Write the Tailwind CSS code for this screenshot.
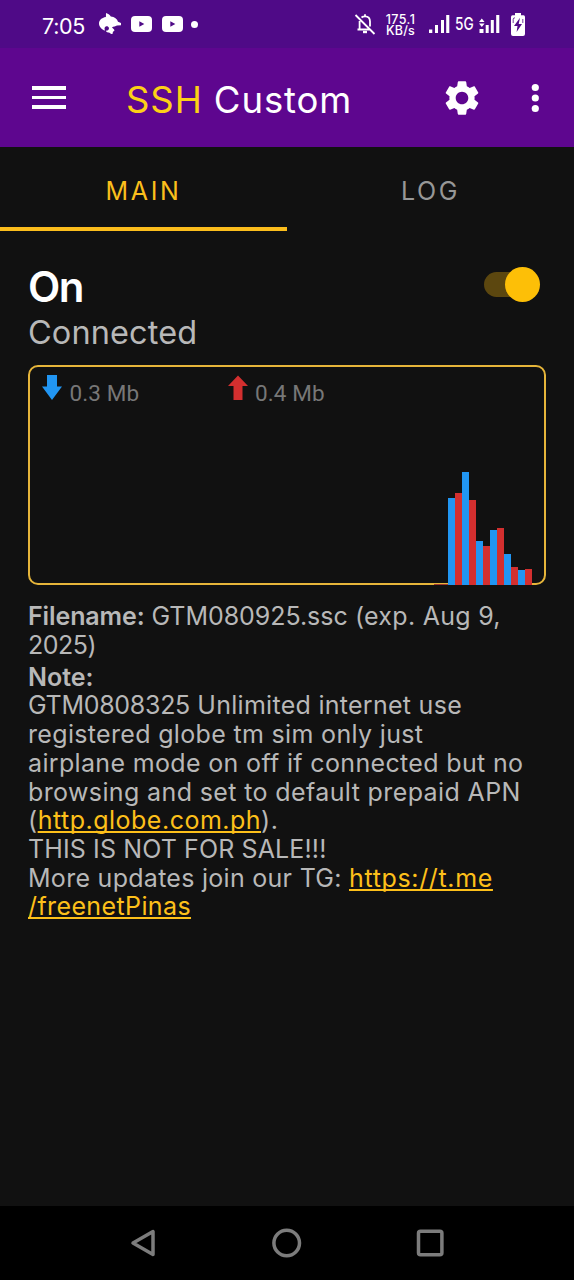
<!DOCTYPE html>
<html lang="en">
<head>
<meta charset="utf-8">
<title>SSH Custom</title>
<script src="https://cdn.jsdelivr.net/npm/@tailwindcss/browser@4"></script>
</head>
<body class="flex h-[1280px] w-[574px] flex-col overflow-hidden bg-[#111111] font-['Inter',sans-serif] text-[#b8b8b8]">

<!-- Status bar -->
<div class="flex h-12 shrink-0 items-center bg-[#4f0a87] pl-[42px] text-white">
  <span class="w-[57px] pt-[3px] text-[21.5px] leading-6 tracking-[-0.3px]">7:05</span>
  <svg class="h-[22px] w-[22px]" viewBox="0 0 22 22" fill="#fff"><path d="M7 0C9.500 .8 11 2 11.800 3.500C15.500 4 18.300 5.800 19 8.800L22 10V12.300L18 12.600C16.500 13.600 14.500 13.600 13 14.200C13.500 15.600 15.300 15.500 15.500 17.500C14.600 18.300 14 18.600 13.800 19.200C14 20.700 13.300 21 12.500 21C11.500 20.600 10.900 19.800 9.800 19.500C7.800 19.700 7 18.800 6.900 17.600C8.500 17.900 9.900 17 10 15C9.500 13.300 8 12.800 6.700 13.400C5.300 14.200 5.200 15.800 6.200 17.600C2.500 16.600 0 13.500 0 10.500C0 7 2.500 4.700 6.900 3.900Z"/></svg>
  <svg class="ml-[10px] h-4 w-[21px]" viewBox="0 0 21 16"><rect width="21" height="16" rx="4" fill="#fff"/><path d="M8.300 5.200L13.300 8L8.300 10.800Z" fill="#4f0a87"/></svg>
  <svg class="ml-[10px] h-4 w-[21px]" viewBox="0 0 21 16"><rect width="21" height="16" rx="4" fill="#fff"/><path d="M8.300 5.200L13.300 8L8.300 10.800Z" fill="#4f0a87"/></svg>
  <span class="ml-2 size-[7px] rounded-full bg-white"></span>
  <svg class="ml-[156px] h-[22px] w-[22px]" viewBox="0 0 22 22" fill="none" stroke="#fff" stroke-width="1.800"><path d="M7.500 4.500C8.500 3.700 9.500 3.300 11 3.300C14.200 3.300 16 5.400 16 8.500V13.500M5.600 8V16.300H15M3.500 16.500H16.500M11 3.500V1.200M1.500 2L20.500 21"/><path d="M9 19H13" stroke-width="2.400"/></svg>
  <span class="ml-[9px] flex w-[31px] flex-col items-center pt-px text-[12.500px] leading-[11px] font-medium whitespace-nowrap"><span class="tracking-[0.4px]">175.1</span><span class="tracking-[0.2px]">KB/s</span></span>
  <svg class="ml-[13px] h-[19px] w-[21px]" viewBox="0 0 21 19" fill="#fff"><path d="M0 14.500h3.300V18H0zM6 10h3V18H6zM12 5h3V18h-3zM17.200 0h3.100V18h-3.100z"/></svg>
  <span class="ml-[5px] w-[20px] origin-left scale-x-[0.78] text-[17.500px] leading-6 font-medium whitespace-nowrap">5G</span>
  <svg class="ml-[4px] h-[19px] w-[21px]" viewBox="0 0 21 19" fill="#fff"><path d="M2.800 3.500L5.600 7H0zM2.800 12L0 8.500H5.600zM.5 14h4V18h-4zM6.700 10h3V18h-3zM11.800 5h3V18h-3zM17.200 0h3.100V18h-3.100z"/></svg>
  <svg class="ml-[11px] h-[23px] w-[14px]" viewBox="0 0 14 23"><path d="M4 0h6v2.300h2.500Q14 2.300 14 4v17q0 2-2 2H2q-2 0-2-2V4q0-1.700 1.500-1.700H4z" fill="#fff"/><path d="M9 4.800L3 13H6.500L5.600 19L11 11H7.700Z" fill="#4f0a87"/><path d="M2.200 10V6.200Q2.200 4.800 4 4.800M11.800 6V10" fill="none" stroke="#4f0a87" stroke-width=".8"/></svg>
</div>

<!-- App bar -->
<header class="flex h-[99px] shrink-0 items-center bg-[#5e068f] pl-8 text-white">
  <div class="flex w-[34px] flex-col gap-[6px]">
    <span class="h-[3.500px] bg-white"></span><span class="h-[3.500px] bg-white"></span><span class="h-[3.500px] bg-white"></span>
  </div>
  <h1 class="ml-[60px] w-[240px] pt-[5px] text-[36.500px] leading-[44px] tracking-[0.900px] whitespace-nowrap"><span class="text-[#fdd017]">SSH</span> Custom</h1>
  <svg class="ml-[74.500px] size-[42px]" viewBox="0 0 24 24" fill="#fff"><path d="M19.140 12.940c.04-.3.060-.61.060-.94 0-.32-.02-.64-.07-.94l2.030-1.580c.18-.14.230-.41.120-.61l-1.920-3.320c-.12-.22-.37-.29-.59-.22l-2.390.96c-.5-.38-1.030-.7-1.620-.94l-.36-2.540c-.04-.24-.24-.41-.48-.41h-3.840c-.24 0-.43.170-.47.410l-.36 2.540c-.59.240-1.130.570-1.620.940l-2.390-.96c-.22-.08-.47 0-.59.220L2.740 8.870c-.12.210-.08.470.12.610l2.030 1.580c-.05.300-.09.630-.09.940s.02.640.070.940l-2.030 1.580c-.18.140-.23.410-.12.610l1.920 3.320c.12.220.37.290.59.220l2.390-.96c.5.380 1.030.7 1.620.940l.36 2.540c.05.240.24.410.48.410h3.840c.24 0 .44-.17.470-.41l.36-2.540c.59-.24 1.130-.56 1.620-.94l2.390.96c.22.080.47 0 .59-.22l1.920-3.320c.12-.22.070-.47-.12-.61l-2.010-1.580zM12 15.600c-1.980 0-3.600-1.620-3.600-3.600s1.620-3.600 3.600-3.600 3.600 1.620 3.600 3.600-1.620 3.600-3.600 3.600z"/></svg>
  <svg class="ml-[48.500px] h-[30px] w-2" viewBox="0 0 8 30" fill="#fff"><circle cx="4.300" cy="4.500" r="3.600"/><circle cx="4.300" cy="15" r="3.600"/><circle cx="4.300" cy="25.500" r="3.600"/></svg>
</header>

<!-- Tabs -->
<nav class="grid h-[84px] shrink-0 grid-cols-2 text-center text-[25px] leading-[30px] tracking-[2.600px]">
  <div class="border-b-4 border-[#fbbd1c] pt-[29px] text-[#fbbf1c]">MAIN</div>
  <div class="pt-[29px] text-[#979797]">LOG</div>
</nav>

<main class="flex flex-1 flex-col px-7">
  <div class="flex h-[134px] justify-between">
    <div class="whitespace-nowrap">
      <div class="mt-[31px] text-[42px] leading-[50px] font-semibold tracking-[-1.500px] text-white">On</div>
      <div class="pt-px text-[32.500px] leading-10 tracking-[0.100px]">Connected</div>
    </div>
    <div class="mt-[36px] mr-[6px] flex h-[35px] w-14 items-center">
      <span class="h-[25px] w-10 rounded-full bg-[#5c470f]"></span>
      <span class="-ml-[19px] size-[35px] shrink-0 rounded-full bg-[#fdbf07]"></span>
    </div>
  </div>

  <!-- Traffic graph -->
  <section class="flex h-[220px] shrink-0 flex-col justify-between rounded-[10px] border-2 border-[#e6b53a] font-[Roboto,sans-serif] text-[22.500px] leading-7 text-[#777777]">
    <div class="flex pt-2 pl-3">
      <div class="flex w-[185.500px]">
        <svg class="h-[25px] w-5" viewBox="0 0 20 25"><path d="M5 0H15V11.500H20L10 25L0 11.500H5Z" fill="#2196f3"/></svg>
        <span class="ml-[7.500px] pt-1 tracking-[0.1px]">0.3 Mb</span>
      </div>
      <div class="flex">
        <svg class="h-[25px] w-5" viewBox="0 0 20 25"><path d="M10 .5L20 11H14.500V25H5.500V11H0Z" fill="#d32f2f"/></svg>
        <span class="ml-[7.500px] pt-1 tracking-[0.1px]">0.4 Mb</span>
      </div>
    </div>
    <div class="-mb-[2px] ml-[404px] flex items-end">
      <span class="h-px w-[14px] bg-[#a33a2c]"></span>
      <span class="h-[87px] w-[7px] bg-[#2196f3]"></span><span class="h-[92px] w-[7px] bg-[#d32f2f]"></span>
      <span class="h-[113px] w-[7px] bg-[#2196f3]"></span><span class="h-[85px] w-[7px] bg-[#d32f2f]"></span>
      <span class="h-[44px] w-[7px] bg-[#2196f3]"></span><span class="h-[39px] w-[7px] bg-[#d32f2f]"></span>
      <span class="h-[55px] w-[7px] bg-[#2196f3]"></span><span class="h-[57px] w-[7px] bg-[#d32f2f]"></span>
      <span class="h-[31px] w-[7px] bg-[#2196f3]"></span><span class="h-[18px] w-[7px] bg-[#d32f2f]"></span>
      <span class="h-[15px] w-[7px] bg-[#2196f3]"></span><span class="h-[16px] w-[7px] bg-[#d32f2f]"></span>
    </div>
  </section>

  <section class="pt-[17.300px] text-[25px] leading-[28.700px] whitespace-nowrap">
    <div class="flex"><b class="w-[123.500px] font-semibold tracking-[-0.1px]">Filename:</b><span><span class="tracking-[-0.050px]">GTM080925.ssc</span><span class="tracking-[0.280px]"> (exp. Aug 9,</span></span></div>
    <div class="tracking-[-0.500px]">2025)</div>
    <div class="pt-[3px] font-semibold">Note:</div>
    <div class="tracking-[0.280px]"><span class="tracking-[-0.300px]">GTM0808325</span> Unlimited internet use</div>
    <div class="tracking-[0.330px]">registered globe tm sim only just</div>
    <div class="tracking-[0.340px]">airplane mode on off if connected but no</div>
    <div class="tracking-[0.380px]">browsing and set to default prepaid APN</div>
    <div class="tracking-[0.500px]">(<a class="text-[#fdc01a] underline decoration-[1.500px] underline-offset-[2px] [text-decoration-skip-ink:none]">http.globe.com.ph</a>).</div>
    <div class="tracking-[0.120px]">THIS IS NOT FOR SALE!!!</div>
    <div class="flex"><span class="w-[321px] tracking-[0.280px]">More updates join our TG:</span><a class="tracking-[0.650px] text-[#fdc01a] underline decoration-[1.500px] underline-offset-[2px] [text-decoration-skip-ink:none]">https://t.me</a></div>
    <div><a class="tracking-[0.390px] text-[#fdc01a] underline decoration-[1.500px] underline-offset-[2px] [text-decoration-skip-ink:none]">/freenetPinas</a></div>
  </section>
</main>

<!-- System navigation -->
<footer class="flex h-[74px] shrink-0 items-center bg-black pl-[130px]">
  <svg class="h-[30px] w-[26px]" viewBox="0 0 26 30" fill="none" stroke="#7c7c7c" stroke-width="3.500" stroke-linejoin="round"><path d="M23 3.500V26.500L3 15Z"/></svg>
  <svg class="ml-[115px] size-[32px]" viewBox="0 0 32 32" fill="none" stroke="#7c7c7c" stroke-width="3.500"><circle cx="15.700" cy="16" r="12.800"/></svg>
  <svg class="ml-[112px] size-[30px]" viewBox="0 0 30 30" fill="none" stroke="#7c7c7c" stroke-width="3.500"><rect x="3.500" y="3.300" width="23.400" height="23.400" rx="2"/></svg>
</footer>
</body>
</html>
